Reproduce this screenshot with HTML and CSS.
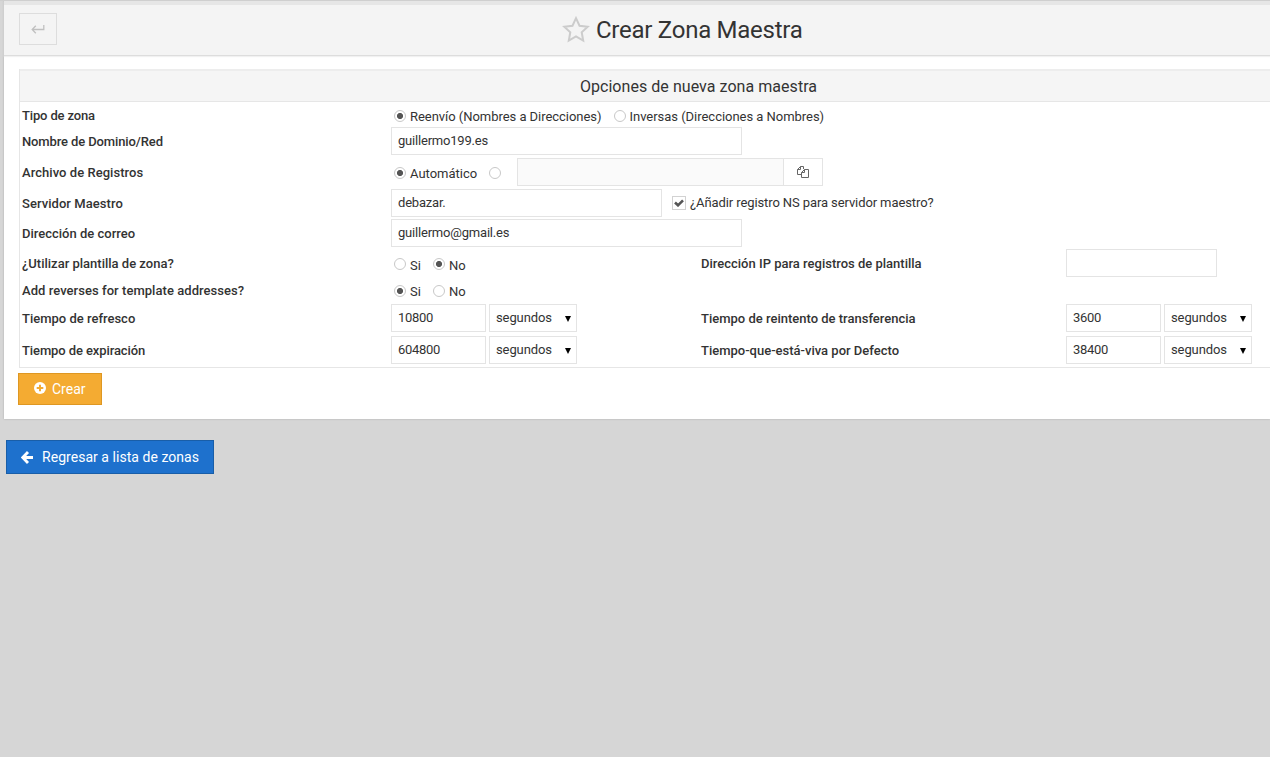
FILE: index.html
```
<!DOCTYPE html>
<html lang="es">
<head>
<meta charset="utf-8">
<title>Crear Zona Maestra</title>
<link rel="stylesheet" href="styles.css">
</head>
<body>
<main class="panel">
  <header class="panel-head">
    <button class="back-btn" aria-label="Volver"><svg width="14" height="10" viewBox="0 0 14 10"><path d="M12.800 1V5.500H1M4.800 1.800L1.200 5.500L4.800 9.200" fill="none" stroke="#c0c0c0" stroke-width="1.300"/></svg></button>
    <h1 class="title"><svg class="star" width="28" height="27" viewBox="0 0 28 27"><path d="M14 2.200L17.500 9.700L25.700 10.700L19.700 16.300L21.200 24.500L14 20.500L6.800 24.500L8.300 16.300L2.300 10.700L10.500 9.700Z" fill="none" stroke="#ccc" stroke-width="2"/></svg><span class="title-text">Crear Zona Maestra</span></h1>
  </header>
  <form class="panel-body">
    <section class="options">
      <h2 class="options-head"><span>Opciones de nueva zona maestra</span></h2>
      <div class="row r-type">
        <b class="label l1">Tipo de zona</b>
        <div class="ctl"><i class="radio on"></i><span class="opt t-fwd">Reenvío (Nombres a Direcciones)</span><i class="radio"></i><span class="opt t-inv">Inversas (Direcciones a Nombres)</span></div>
      </div>
      <div class="row r-domain">
        <b class="label l2">Nombre de Dominio/Red</b>
        <div class="ctl"><input class="field wide" value="guillermo199.es"></div>
      </div>
      <div class="row r-file">
        <b class="label l3">Archivo de Registros</b>
        <div class="ctl"><i class="radio on"></i><span class="opt t-auto">Automático</span><i class="radio"></i><input class="field path" disabled><button type="button" class="browse" aria-label="Elegir archivo"><svg width="12" height="12" viewBox="0 0 12 12"><path d="M4.500 8.500H.5V3.500L3.500 .5H6.500V3M3.500 .5V3.500H.5M7.500 3.500H11.500V11.500H4.500V6.500L7.500 3.500V6.500H4.500" fill="none" stroke="#666"/></svg></button></div>
      </div>
      <div class="row r-server">
        <b class="label l4">Servidor Maestro</b>
        <div class="ctl"><input class="field server" value="debazar."><i class="check"><svg width="10" height="8" viewBox="0 0 10 8"><path d="M1 3.500L4 6.300L9 1.300" fill="none" stroke="#555" stroke-width="2.600"/></svg></i><span class="opt t-ns">¿Añadir registro NS para servidor maestro?</span></div>
      </div>
      <div class="row r-mail">
        <b class="label l5">Dirección de correo</b>
        <div class="ctl"><input class="field wide" value="guillermo@gmail.es"></div>
      </div>
      <div class="row r-template">
        <b class="label l6">¿Utilizar plantilla de zona?</b>
        <div class="ctl"><i class="radio"></i><span class="opt t-yes">Si</span><i class="radio on"></i><span class="opt">No</span></div>
        <b class="label r6">Dirección IP para registros de plantilla</b>
        <div class="ctl"><input class="field ip"></div>
      </div>
      <div class="row r-reverse">
        <b class="label l7">Add reverses for template addresses?</b>
        <div class="ctl"><i class="radio on"></i><span class="opt t-yes">Si</span><i class="radio"></i><span class="opt">No</span></div>
      </div>
      <div class="row r-time">
        <b class="label l8">Tiempo de refresco</b>
        <div class="ctl"><input class="field time" value="10800"><span class="select"><span>segundos</span><i class="caret"></i></span></div>
        <b class="label r8">Tiempo de reintento de transferencia</b>
        <div class="ctl"><input class="field time" value="3600"><span class="select"><span>segundos</span><i class="caret"></i></span></div>
      </div>
      <div class="row r-time">
        <b class="label l9">Tiempo de expiración</b>
        <div class="ctl"><input class="field time" value="604800"><span class="select"><span>segundos</span><i class="caret"></i></span></div>
        <b class="label r9">Tiempo-que-está-viva por Defecto</b>
        <div class="ctl"><input class="field time" value="38400"><span class="select"><span>segundos</span><i class="caret"></i></span></div>
      </div>
    </section>
    <button type="button" class="create"><svg width="12" height="12" viewBox="0 0 12 12"><circle cx="6" cy="6" r="6" fill="#fff"/><path d="M6 2.700v6.600M2.700 6h6.600" stroke="#f4ab32" stroke-width="2"/></svg><span>Crear</span></button>
  </form>
</main>
<a class="return"><svg width="12" height="13" viewBox="0 0 12 13"><path d="M7 1L1.800 6.500L7 12M2 6.500H12" fill="none" stroke="#fff" stroke-width="2.800"/></svg><span>Regresar a lista de zonas</span></a>
</body>
</html>
```
FILE: styles.css
```
* { box-sizing: border-box; }
body {
  margin: 0;
  height: 757px;
  overflow: hidden;
  padding-left: 4px;
  background: #d6d6d6;
  border-top: 1px solid #cfcfcf;
  font-family: Roboto, sans-serif;
  font-size: 13px;
  color: #333;
}
.panel {
  height: 418px;
  background: #fff;
  box-shadow: 0 0 2px rgba(0, 0, 0, .2);
}
.panel-head {
  display: flex;
  align-items: flex-start;
  height: 55px;
  padding: 8px 15px 0;
  background: #f4f4f4;
  border-top: 4px solid #e6e6e6;
  border-bottom: 1px solid #ddd;
  box-shadow: 0 1px 1px #f1f1f1;
}
.back-btn {
  display: flex;
  align-items: center;
  justify-content: center;
  width: 38px;
  height: 32px;
  padding: 0;
  background: #f4f4f4;
  border: 1px solid #ddd;
}
.title {
  display: flex;
  margin: 0 0 0 505px;
  font-size: 24px;
  line-height: 35px;
  font-weight: 400;
  letter-spacing: -.26px;
}
.star { margin-top: 3px; margin-right: 6px; }
.panel-body { padding: 13px 0 0 15px; }
.options {
  height: 299px;
  border-left: 1px solid #e6e6e6;
  border-bottom: 1px solid #e6e6e6;
}
.options-head {
  height: 33px;
  margin: 0;
  padding-left: 107px;
  background: #f5f5f5;
  border-top: 2px solid #ededed;
  border-bottom: 1px solid #e6e6e6;
  font-size: 16px;
  font-weight: 400;
  line-height: 31px;
  letter-spacing: .05px;
  text-align: center;
}
.row {
  display: grid;
  grid-template-columns: 369px 310px 365px 1fr;
  align-items: center;
  padding-left: 2px;
}
.label { font-weight: 500; white-space: nowrap; justify-self: start; }
.l1 { letter-spacing: -.15px; }
.l2 { letter-spacing: -.12px; }
.l3, .l4, .l7 { letter-spacing: .05px; }
.l8 { letter-spacing: 0; }
.l9 { letter-spacing: -.1px; }
.ctl { display: flex; align-items: center; white-space: nowrap; }
.ctl > * { flex: none; }
.r-type { height: 24px; padding-top: 4px; }
.r-type .label { margin-top: -2px; }
.r-domain { height: 30px; }
.r-file { height: 32px; }
.r-server { height: 30px; }
.r-mail { height: 30px; }
.r-template { height: 30px; }
.r-reverse { height: 24px; }
.r-time { height: 32px; }
.field, .select {
  height: 28px;
  border: 1px solid #e4e4e4;
  background: #fff;
  padding: 0 6px 2px;
  font: 13px/24px Roboto, sans-serif;
  letter-spacing: -.2px;
  color: #333;
}
.wide { width: 351px; }
.server { width: 271px; }
.ip { width: 151px; }
.time { width: 95px; margin-right: 3px; letter-spacing: -.3px; }
.path { width: 267px; margin-left: 12px; background: #fafafa; }
.browse {
  display: flex;
  align-items: center;
  justify-content: center;
  width: 40px;
  height: 28px;
  margin-left: -1px;
  padding: 0;
  background: #fff;
  border: 1px solid #e4e4e4;
}
.select {
  display: flex;
  justify-content: space-between;
  align-items: center;
  width: 88px;
  padding: 0 5px 0 6px;
  letter-spacing: -.1px;
}
.caret {
  border: 3px solid transparent;
  border-top: 6px solid #000;
  border-bottom: 0;
  margin-top: 2px;
}
.radio {
  width: 12px;
  height: 12px;
  margin: 0 4px 0 3px;
  border: 1px solid #c8c8c8;
  border-radius: 50%;
  background: #fff;
}
.radio.on { background: radial-gradient(circle, #555 0 2.700px, #fff 3.400px); }
.opt + .radio { margin-left: 12px; }
.t-fwd { letter-spacing: -.04px; }
.t-inv { letter-spacing: -.03px; }
.t-ns { letter-spacing: -.1px; }
.r-file .radio, .r-template .radio, .r-reverse .radio { margin-top: 2px; }
.r-file .opt, .r-reverse .opt { padding-top: 2px; }
.r-template .opt { padding-top: 4px; }
.r-server .opt { margin-top: -2px; }
.check {
  display: flex;
  align-items: center;
  justify-content: center;
  width: 14px;
  height: 14px;
  margin: 0 4px 0 10px;
  border: 1px solid #d2d2d2;
}
.create, .return {
  display: flex;
  align-items: center;
  font: 14px/20px Roboto, sans-serif;
  color: #fff;
  white-space: nowrap;
}
.create {
  width: 84px;
  height: 32px;
  margin: 5px 0 0 -1px;
  padding: 0 0 0 15px;
  background: #f4ab32;
  border: 1px solid #de9722;
}
.create svg { margin-top: -2px; }
.create span { margin-left: 6px; }
.return {
  width: 208px;
  height: 34px;
  margin: 21px 0 0 2px;
  padding-left: 14px;
  background: #1e71cd;
  border: 1px solid #195ea8;
}
.return span { margin-left: 9px; letter-spacing: .04px; }
```
